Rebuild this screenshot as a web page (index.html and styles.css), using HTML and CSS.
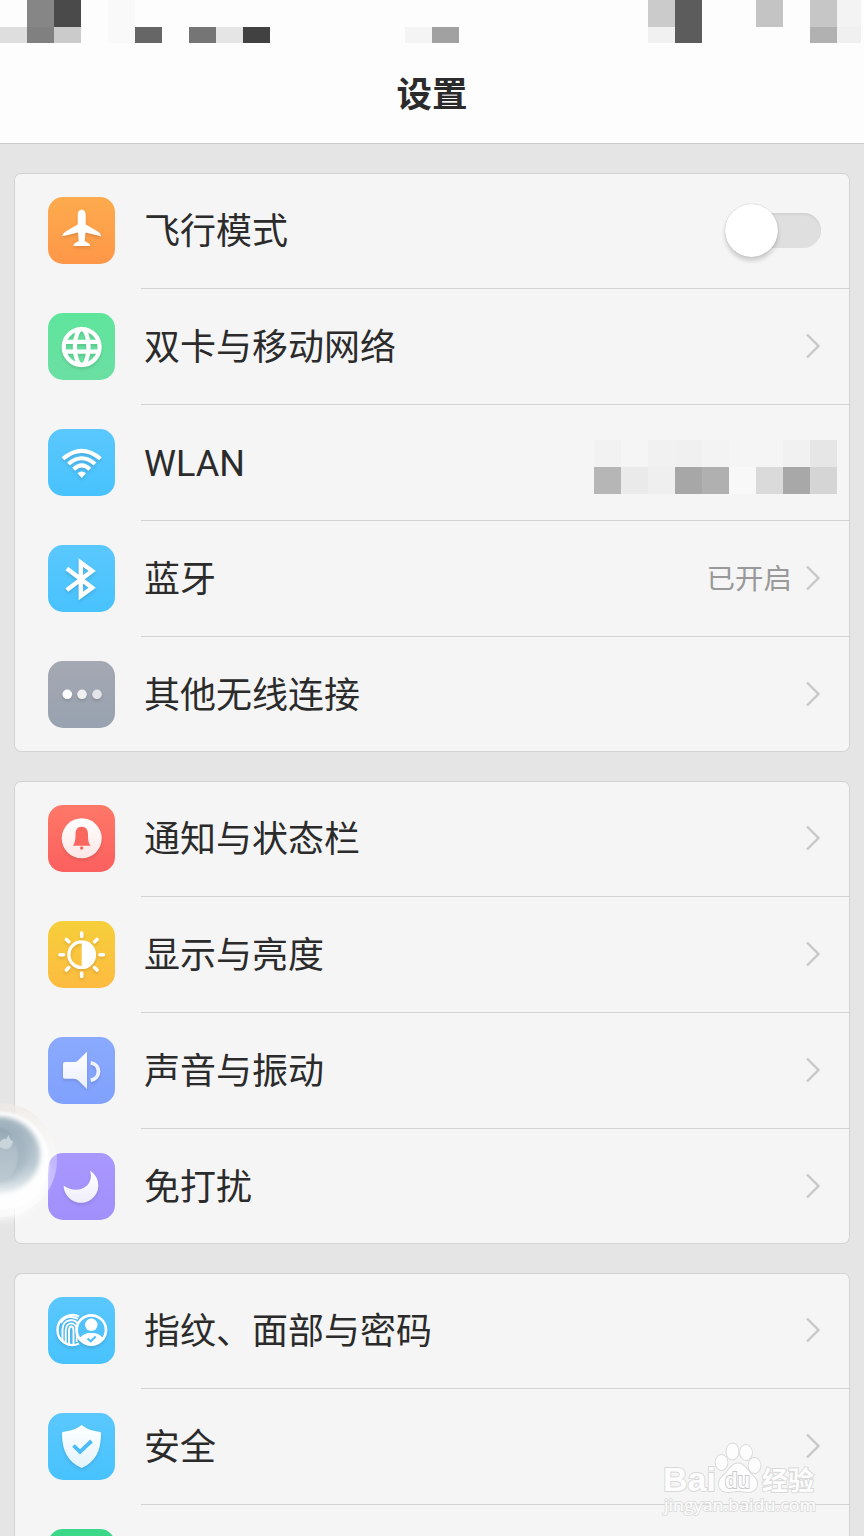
FILE: index.html
```html
<!DOCTYPE html>
<html lang="zh-CN">
<head>
  <meta charset="UTF-8">
  <meta name="viewport" content="width=device-width, initial-scale=1.0">
  <title>设置</title>
  <link rel="stylesheet" href="styles.css">
</head>
<body>
  <!-- shared symbols -->
  <svg class="defs" width="0" height="0">
    <symbol id="arrow" viewBox="0 0 16 28"><path d="M2 2.500 L13.500 14 L2 25.500" fill="none" stroke="#c8c8c8" stroke-width="2.400"/></symbol>
    <linearGradient id="fade" x1="0" y1="0" x2="0" y2="1">
      <stop offset="0" stop-color="#fff"/>
      <stop offset="1" stop-color="#fff" stop-opacity=".85"/>
    </linearGradient>
  </svg>

  <header class="header">
    <svg class="status" viewBox="0 0 864 43">
      <rect x="27" width="27" height="27" fill="#868686"/>
      <rect x="54" width="27" height="27" fill="#4a4a4a"/>
      <rect y="27" width="27" height="16" fill="#dedede"/>
      <rect x="27" y="27" width="27" height="16" fill="#808080"/>
      <rect x="54" y="27" width="27" height="16" fill="#cbcbcb"/>
      <rect x="108" width="27" height="43" fill="#f9f9f9"/>
      <rect x="135" y="27" width="27" height="16" fill="#666"/>
      <rect x="189" y="27" width="27" height="16" fill="#757575"/>
      <rect x="216" y="27" width="27" height="16" fill="#e5e5e5"/>
      <rect x="243" y="27" width="27" height="16" fill="#414141"/>
      <rect x="405" y="27" width="27" height="16" fill="#f4f4f4"/>
      <rect x="432" y="27" width="27" height="16" fill="#a1a1a1"/>
      <rect x="648" width="27" height="27" fill="#cbcbcb"/>
      <rect x="675" width="27" height="43" fill="#5c5c5c"/>
      <rect x="648" y="27" width="27" height="16" fill="#f1f1f1"/>
      <rect x="756" width="27" height="27" fill="#c4c4c4"/>
      <rect x="810" width="27" height="27" fill="#c6c6c6"/>
      <rect x="837" width="24" height="27" fill="#f3f3f3"/>
      <rect x="810" y="27" width="27" height="16" fill="#b1b1b1"/>
      <rect x="837" y="27" width="24" height="16" fill="#f0f0f0"/>
    </svg>
    <h1 class="title">设置</h1>
  </header>

  <main class="list">
    <section class="card">
      <div class="row">
        <svg class="icon orange" viewBox="0 0 67 67"><path fill="#fff" d="M33.700 12.700 C31 12.700 29.700 15 29.700 18 V27.500 L18.500 34 C16 35.500 14.500 37 14.500 39.300 L30 35.500 L30.700 44 L26.500 46.500 Q25.500 47 25.500 49 H42 Q42 47 41 46.500 L36.700 44 L37.500 35.500 L53 39.300 C53 37 51.500 35.500 49 34 L37.700 27.500 V18 C37.700 15 36.400 12.700 33.700 12.700 Z"/></svg>
        <div class="body"><span class="label">飞行模式</span><span class="switch"><span class="knob"></span></span></div>
      </div>
      <div class="row">
        <svg class="icon green" viewBox="0 0 67 67">
          <g fill="none" stroke="#fff" stroke-width="4.300"><circle cx="33.700" cy="34" r="17.900"/><ellipse cx="33.700" cy="34" rx="6.800" ry="18"/><path d="M17 28.800h33.500M17 38.700h33.500"/></g>
        </svg>
        <div class="body"><span class="label">双卡与移动网络</span><svg class="arrow"><use href="#arrow"/></svg></div>
      </div>
      <div class="row">
        <svg class="icon blue" viewBox="0 0 67 67">
          <g fill="none" stroke="#fff" stroke-width="4"><path d="M15 29.800 Q33.700 13.800 52.400 29.800M20.500 35 Q33.700 23.500 47 35M25.700 40.200 Q33.700 32.500 41.800 40.200"/></g>
          <path fill="#fff" d="M29.500 44.200 Q33.700 41 38 44.200 L33.700 49 Z"/>
        </svg>
        <div class="body">
          <span class="label">WLAN</span>
          <svg class="mosaic" viewBox="0 0 243 54">
            <rect width="27" height="27" fill="#f2f2f2"/>
            <rect x="54" width="27" height="27" fill="#f1f1f1"/>
            <rect x="81" width="27" height="27" fill="#f0f0f0"/>
            <rect x="108" width="27" height="27" fill="#f3f3f3"/>
            <rect x="189" width="27" height="27" fill="#f1f1f1"/>
            <rect x="216" width="27" height="27" fill="#e6e6e6"/>
            <rect y="27" width="27" height="27" fill="#b6b6b6"/>
            <rect x="27" y="27" width="27" height="27" fill="#eaeaea"/>
            <rect x="54" y="27" width="27" height="27" fill="#efefef"/>
            <rect x="81" y="27" width="27" height="27" fill="#a7a7a7"/>
            <rect x="108" y="27" width="27" height="27" fill="#b0b0b0"/>
            <rect x="135" y="27" width="27" height="27" fill="#f8f8f8"/>
            <rect x="162" y="27" width="27" height="27" fill="#dadada"/>
            <rect x="189" y="27" width="27" height="27" fill="#a8a8a8"/>
            <rect x="216" y="27" width="27" height="27" fill="#d5d5d5"/>
          </svg>
        </div>
      </div>
      <div class="row">
        <svg class="icon blue" viewBox="0 0 67 67"><path fill="none" stroke="#fff" stroke-width="4.300" d="M18.800 23.500 L44.200 42.700 L32.800 51 V17.500 L44.200 26 L18.800 45"/></svg>
        <div class="body"><span class="label">蓝牙</span><span class="value">已开启</span><svg class="arrow"><use href="#arrow"/></svg></div>
      </div>
      <div class="row">
        <svg class="icon gray" viewBox="0 0 67 67"><circle cx="19.300" cy="33.300" r="4.800" fill="#fff"/><circle cx="34" cy="33.300" r="4.800" fill="#eff0f2"/><circle cx="49" cy="33.300" r="4.800" fill="#e3e5e9"/></svg>
        <div class="body"><span class="label">其他无线连接</span><svg class="arrow"><use href="#arrow"/></svg></div>
      </div>
    </section>

    <section class="card">
      <div class="row">
        <svg class="icon red" viewBox="0 0 67 67">
          <circle cx="33.700" cy="33.300" r="20" fill="url(#fade)"/>
          <path class="flat" fill="#f9675f" d="M33.700 21.800 C29.300 21.800 27.500 25 27.500 29 C27.500 35 27 38 24.800 40.700 H42.600 C40.400 38 40 35 40 29 C40 25 38 21.800 33.700 21.800 Z"/>
          <circle class="flat" cx="33.700" cy="43" r="1.700" fill="#f9675f"/>
        </svg>
        <div class="body"><span class="label">通知与状态栏</span><svg class="arrow"><use href="#arrow"/></svg></div>
      </div>
      <div class="row">
        <svg class="icon yellow" viewBox="0 0 67 67">
          <circle cx="33.700" cy="33.700" r="12.800" fill="none" stroke="#fff" stroke-width="3.200"/>
          <path class="flat" fill="#fff" d="M33.700 21 A12.700 12.700 0 0 1 33.700 46.400 Z"/>
          <g stroke="#fff" stroke-width="3.600" stroke-linecap="round"><path d="M33.700 12v3.500M33.700 52v3.500M12 33.700h3.500M52 33.700h3.500M18.400 18.400l2.400 2.400M46.600 46.600l2.400 2.400M18.400 49l2.400-2.400M46.600 20.800l2.400-2.400"/></g>
        </svg>
        <div class="body"><span class="label">显示与亮度</span><svg class="arrow"><use href="#arrow"/></svg></div>
      </div>
      <div class="row">
        <svg class="icon indigo" viewBox="0 0 67 67">
          <path fill="url(#fade)" d="M17 25 H26 Q28.500 25 30 23.500 L39 14.700 V52 L30 43.300 Q28.500 41.700 26 41.700 H17 Q15 41.700 15 40 V27 Q15 25 17 25 Z"/>
          <path fill="none" stroke="#f0f3ff" stroke-width="3.800" d="M42.700 25.800 C53 27 53 42 42.700 43.200"/>
        </svg>
        <div class="body"><span class="label">声音与振动</span><svg class="arrow"><use href="#arrow"/></svg></div>
      </div>
      <div class="row">
        <svg class="icon purple" viewBox="0 0 67 67"><path fill="url(#fade)" d="M42 17.700 A17.300 17.300 0 1 1 15.700 32.700 C30 42.500 47 33 42 17.700 Z"/></svg>
        <div class="body"><span class="label">免打扰</span><svg class="arrow"><use href="#arrow"/></svg></div>
      </div>
    </section>

    <section class="card">
      <div class="row">
        <svg class="icon blue" viewBox="0 0 67 67">
          <g fill="none" stroke="#fff" stroke-width="1.900">
            <path stroke-width="2.400" d="M31 19.500 A15 15 0 1 0 31 46.500"/>
            <path d="M14.500 45V32.500C14.500 21 29 20.500 31 29M17.700 46V34C17.700 24 28 24 28.700 33M21 47.500V34C21 28 25.500 28 25.500 34V47.500M28.700 33V45M13 26C17 18.500 25 19 30 22"/>
          </g>
          <circle cx="43.300" cy="33" r="14.700" fill="#52c2fb" stroke="#fff" stroke-width="2.700"/>
          <circle class="flat" cx="43.300" cy="27.800" r="6.200" fill="#fff"/>
          <path class="flat" fill="#fff" d="M31.500 41.500 C34 38 37 36 43.300 36 C49.600 36 52.600 38 55.100 41.500 C50 49.500 36.600 49.500 31.500 41.500 Z"/>
          <path class="flat" fill="none" stroke="#4abffb" stroke-width="2" d="M39.500 41.500l3.200 2.800 5-4.800"/>
        </svg>
        <div class="body"><span class="label">指纹、面部与密码</span><svg class="arrow"><use href="#arrow"/></svg></div>
      </div>
      <div class="row">
        <svg class="icon blue" viewBox="0 0 67 67">
          <path fill="url(#fade)" d="M33.700 12 C28 16.500 22 18 14.800 19 Q14 19.200 14 20.500 C14 38 20 49 33.700 55 C47.400 49 53 38 53 20.500 Q53 19.200 52.200 19 C45 18 39 16.500 33.700 12 Z"/>
          <path class="flat" fill="none" stroke="#49bdfb" stroke-width="3.800" d="M25.500 32.500 L32 38.800 L43.500 28"/>
        </svg>
        <div class="body"><span class="label">安全</span><svg class="arrow"><use href="#arrow"/></svg></div>
      </div>
      <div class="row cut">
        <svg class="icon emerald" viewBox="0 0 67 67"></svg>
      </div>
    </section>
  </main>

  <!-- floating assist ball, half off the left edge -->
  <svg class="ball" viewBox="0 1090 70 140">
    <defs>
      <linearGradient id="halo" x1="0" y1="0" x2="0" y2="1">
        <stop offset="0" stop-color="#eee9e3" stop-opacity=".8"/>
        <stop offset=".5" stop-color="#fff" stop-opacity=".3"/>
        <stop offset="1" stop-color="#fff" stop-opacity=".5"/>
      </linearGradient>
      <linearGradient id="well" x1="0" y1="0" x2="0" y2="1">
        <stop offset="0" stop-color="#a3b4bf"/>
        <stop offset=".6" stop-color="#b9c8d1"/>
        <stop offset="1" stop-color="#e3eaee"/>
      </linearGradient>
      <linearGradient id="core" x1="0" y1="0" x2="0" y2="1">
        <stop offset="0" stop-color="#92a5b1"/>
        <stop offset=".4" stop-color="#aebdc7"/>
        <stop offset="1" stop-color="#bccad2"/>
      </linearGradient>
      <filter id="soft1"><feGaussianBlur stdDeviation="1"/></filter>
      <filter id="soft2"><feGaussianBlur stdDeviation="2.500"/></filter>
      <filter id="soft3"><feGaussianBlur stdDeviation="4"/></filter>
    </defs>
    <circle cx="0" cy="1174" r="46" fill="#fff" opacity=".7" filter="url(#soft3)"/>
    <circle cx="0" cy="1160" r="57" fill="url(#halo)"/>
    <circle cx="0" cy="1161" r="49" fill="#fff" opacity=".95" filter="url(#soft1)"/>
    <ellipse cx="0" cy="1155" rx="40" ry="38" fill="url(#well)" filter="url(#soft2)"/>
    <ellipse cx="0" cy="1152" rx="28" ry="30" fill="#98abb8" opacity=".6" filter="url(#soft3)"/>
    <ellipse cx="0" cy="1155" rx="18" ry="27" fill="url(#core)" filter="url(#soft1)"/>
    <path d="M0 1142 Q3 1138 6 1139 L9 1135 Q9 1140 13 1141 Q12 1149 6 1149 Q2 1149 0 1147 Z" fill="#c9d4db"/>
  </svg>

  <svg class="watermark" viewBox="0 0 160 80">
    <g fill="#fdfdfd" stroke="#d8d8d8" stroke-width="1.800">
      <g class="bold">
        <text class="latin" x="2" y="51" font-size="34" textLength="53" lengthAdjust="spacingAndGlyphs">Bai</text>
        <text x="101" y="50" font-size="26" textLength="52">经验</text>
      </g>
      <ellipse cx="60.500" cy="22.500" rx="6" ry="7.500"/>
      <ellipse cx="71.500" cy="11.500" rx="6" ry="8"/>
      <ellipse cx="85" cy="12.500" rx="6" ry="7.500"/>
      <ellipse cx="93.500" cy="25.500" rx="6" ry="7.500"/>
      <path d="M77 23.500 C70 23.500 68 31 62 36 C55 42 57 52 67 52 C72 52 73 51 77 51 C81 51 82 52 87 52 C97 52 99 42 92 36 C86 31 84 23.500 77 23.500 Z"/>
      <text class="bold latin" x="64" y="48" font-size="22" stroke="#c8c8c8" textLength="25" lengthAdjust="spacingAndGlyphs">du</text>
      <text class="url" x="3" y="71" font-size="17" textLength="152" lengthAdjust="spacingAndGlyphs">jingyan.baidu.com</text>
    </g>
  </svg>
</body>
</html>
```
FILE: styles.css
```css
* {
  box-sizing: border-box;
}
body {
  margin: 0;
  height: 1536px;
  position: relative;
  overflow: hidden;
  background: #e5e5e5;
  color: #2b2b2b;
  font-family: Roboto, "Noto Sans CJK SC", sans-serif;
}
.defs {
  position: absolute;
}
.header {
  height: 144px;
  background: #fdfdfd;
  border-bottom: 1px solid #cbcbcb;
}
.status {
  display: block;
  width: 864px;
  height: 43px;
}
.title {
  margin: 0;
  padding-top: 4px;
  text-align: center;
  font-size: 35.5px;
  line-height: 96px;
  font-weight: bold;
}
.list {
  display: flex;
  flex-direction: column;
  gap: 29px;
  padding: 29px 14px 0;
}
.card {
  border-radius: 7px;
  background: #f5f5f5;
  box-shadow: inset 0 0 0 1px #d3d3d3;
}
.card:last-child {
  border-radius: 7px 7px 0 0;
  box-shadow: inset 1px 1px 0 #d3d3d3, inset -1px 0 0 #d3d3d3;
}
.row {
  display: flex;
  height: 116px;
  padding-left: 34px;
}
.row:last-child {
  height: 115px;
}
.row.cut {
  height: 31px;
  overflow: hidden;
}
.icon {
  flex: none;
  width: 67px;
  height: 67px;
  margin-top: 24px;
  border-radius: 15px;
}
.icon > * {
  filter: drop-shadow(0 2px 1.5px rgba(0, 0, 0, .12));
}
.icon > .flat {
  filter: none;
}
.orange { background: linear-gradient(#fdab4e, #fe9748); }
.green { background: linear-gradient(#5fe59c, #6bdfa3); }
.blue { background: linear-gradient(#5ac8fe, #48c2fd); }
.gray { background: linear-gradient(#a4a8b2, #98a2b0); }
.red { background: linear-gradient(#fe7868, #fb605f); }
.yellow { background: linear-gradient(#f6cf3a, #fdbb40); }
.indigo { background: linear-gradient(#8aaafe, #80a1fd); }
.purple { background: linear-gradient(#a998fe, #a18ffb); }
.emerald { background: #3bd88a; }

.body {
  flex: 1;
  display: flex;
  align-items: center;
  margin-left: 26px;
  padding: 0 29px 0 3px;
  border-bottom: 1px solid #d3d3d3;
}
.row:last-child .body {
  border-bottom: 0;
}
.label {
  flex: 1;
  padding-top: 2px;
  font-size: 36px;
  line-height: 52px;
}
.value {
  margin-right: 13px;
  font-size: 28.5px;
  line-height: 40px;
  padding-top: 3px;
  color: #999;
}
.arrow {
  width: 16px;
  height: 28px;
  margin-bottom: 1px;
}
.mosaic {
  width: 243px;
  height: 54px;
  margin: 8px -16px 0 0;
}
.switch {
  width: 95px;
  height: 35px;
  border-radius: 18px;
  background: #dfdfdf;
  box-shadow: inset 0 2px 2px #d2d2d2;
  display: flex;
  align-items: center;
}
.knob {
  width: 53px;
  height: 53px;
  margin-left: -1px;
  border-radius: 50%;
  background: #fff;
  box-shadow: 0 0 1px rgba(0, 0, 0, .3), 0 4px 4px rgba(0, 0, 0, .16);
}

.ball {
  position: absolute;
  left: 0;
  top: 1090px;
  width: 70px;
  height: 140px;
}

.watermark {
  position: absolute;
  left: 661px;
  top: 1440px;
  width: 160px;
  height: 80px;
  paint-order: stroke;
  font-family: "Open Sans", "Noto Sans CJK SC", sans-serif;
}
.bold {
  font-weight: bold;
}
.latin {
  font-family: "Liberation Sans", sans-serif;
}
.url {
  stroke: #dedede;
}
```
